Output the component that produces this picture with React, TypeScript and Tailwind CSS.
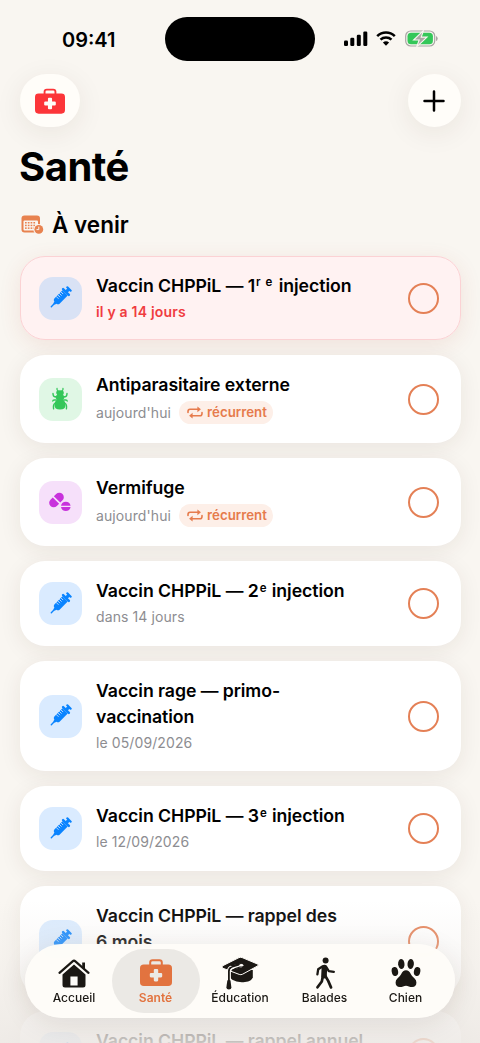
import type { ReactNode } from "react";
import clsx from "clsx";

type Kind = "vaccine" | "lateVaccine" | "parasite" | "pill";

type Reminder = {
  title: ReactNode;
  due: string;
  kind: Kind;
  late?: boolean;
  recurring?: boolean;
  height: string;
};

const reminders: Reminder[] = [
  {
    title: (
      <>
        Vaccin CHPPiL — 1
        <span className="relative -top-[6px] ml-[1px] text-[11.5px] leading-none">r</span>
        <span className="relative -top-[6px] ml-[5px] mr-[2px] text-[11.5px] leading-none">e</span> injection
      </>
    ),
    due: "il y a 14 jours",
    kind: "lateVaccine",
    late: true,
    height: "h-[84.5px]",
  },
  { title: "Antiparasitaire externe", due: "aujourd'hui", kind: "parasite", recurring: true, height: "h-[88px]" },
  { title: "Vermifuge", due: "aujourd'hui", kind: "pill", recurring: true, height: "h-[88px]" },
  {
    title: (
      <>
        Vaccin CHPPiL — 2
        <span className="relative -top-[5px] ml-[1px] mr-[1px] text-[11.5px] leading-none">e</span> injection
      </>
    ),
    due: "dans 14 jours",
    kind: "vaccine",
    height: "h-[84.5px]",
  },
  {
    title: (
      <>
        Vaccin rage — primo-
        <br />
        vaccination
      </>
    ),
    due: "le 05/09/2026",
    kind: "vaccine",
    height: "h-[110.5px]",
  },
  {
    title: (
      <>
        Vaccin CHPPiL — 3
        <span className="relative -top-[5px] ml-[1px] mr-[1px] text-[11.5px] leading-none">e</span> injection
      </>
    ),
    due: "le 12/09/2026",
    kind: "vaccine",
    height: "h-[84.5px]",
  },
  {
    title: (
      <>
        Vaccin CHPPiL — rappel des
        <br />6 mois
      </>
    ),
    due: "le 12/12/2026",
    kind: "vaccine",
    height: "h-[110.5px]",
  },
  { title: "Vaccin CHPPiL — rappel annuel", due: "le 12/06/2027", kind: "vaccine", height: "h-[84.5px]" },
];

function MedicalCase({ className }: { className?: string }) {
  return (
    <svg viewBox="0 0 32 27" className={className} fill="currentColor">
      <path d="M10.2 6V3.6Q10.2 1.3 12.6 1.3h6.8q2.4 0 2.4 2.3V6" fill="none" stroke="currentColor" strokeWidth="2" />
      <path
        fillRule="evenodd"
        d="M3.8 5.5h24.4Q32 5.5 32 9.2v14Q32 27 28.2 27H3.8Q0 27 0 23.2v-14Q0 5.5 3.8 5.5ZM14.9 10q-1.100 0-1.100 1.100v2.900H10.900q-1.100 0-1.100 1.100v2.200q0 1.100 1.100 1.100h2.900v2.900q0 1.100 1.100 1.100h2.200q1.100 0 1.100-1.100v-2.900h2.900q1.100 0 1.100-1.100v-2.200q0-1.100-1.100-1.100h-2.900v-2.900q0-1.100-1.100-1.100Z"
      />
    </svg>
  );
}

function CalendarClock() {
  return (
    <svg viewBox="0 0 23 20" className="h-5 w-[23px]">
      <rect x="0.5" y="0.5" width="18.5" height="17" rx="3" fill="#e8824f" />
      <rect x="2.5" y="5.5" width="14.5" height="10" rx="1" fill="#f9f6f1" />
      <g fill="#e8824f">
        {[4, 6.8, 9.6, 12.4].map((x) => (
          <g key={x}>
            <rect x={x} y="7" width="1.7" height="1.5" />
            <rect x={x} y="9.7" width="1.7" height="1.5" />
            <rect x={x} y="12.4" width="1.7" height="1.5" />
          </g>
        ))}
      </g>
      <circle cx="17.8" cy="14.4" r="5.4" fill="#f9f6f1" />
      <circle cx="17.8" cy="14.4" r="4.4" fill="#e8824f" />
      <path d="M17.8 11.6v3h-2.3" fill="none" stroke="#f9f6f1" strokeWidth="1" />
    </svg>
  );
}

function Syringe() {
  return (
    <svg viewBox="0 0 24 24" className="size-6" fill="currentColor">
      <g transform="rotate(45 12 12)">
        <rect x="8.6" y="-1.8" width="6.8" height="2.2" rx="1" />
        <rect x="10.4" y="-1" width="3.2" height="4" />
        <rect x="6.7" y="2.3" width="10.6" height="2.5" rx="1.2" />
        <path d="M8.3 4.8h7.4v11.5q0 1.8-2.3 2.300l-.4 1.900h-2l-.4-1.900q-2.300-.5-2.300-2.300Z" />
        <rect x="11.3" y="19.5" width="1.4" height="5.5" rx="0.7" />
        <path d="M8 7h3.400M8 9.200h3.400M8 11.400h3.400M8 13.600h3.400" stroke="#daeafe" strokeWidth="0.8" fill="none" />
      </g>
    </svg>
  );
}

function Bug() {
  return (
    <svg viewBox="0 0 16 24" className="h-6 w-4" fill="currentColor">
      <path d="M5 1.5Q4.6 3 6.2 4M11 1.5Q11.4 3 9.8 4" stroke="currentColor" strokeWidth="1.3" strokeLinecap="round" fill="none" />
      <path d="M4.2 5.6Q4.2 3.200 8 3.200t3.800 2.400-1 2.200Q12.700 8.700 12.500 10.500q-.2 1.600-1.700 2 2.800 1.900 2.800 5.500Q13.600 22.600 8 22.600T2.400 18q0-3.600 2.800-5.500-1.500-.4-1.700-2Q3.300 8.700 5.200 7.800 4.200 7.200 4.200 5.600Z" />
      <path
        d="M4.500 9.800H2.700Q1 9.500 1 6.500M11.500 9.800h1.800Q15 9.500 15 6.500M5 13H2.200Q.9 13 .8 14M11 13h2.800q1.300 0 1.400 1M2.800 16.500Q.9 17.500 1.600 21.800M13.200 16.500q1.900 1 1.200 5.300"
        fill="none"
        stroke="currentColor"
        strokeWidth="1.4"
        strokeLinecap="round"
      />
    </svg>
  );
}

function Pills() {
  return (
    <svg viewBox="0 0 24 24" className="size-6" fill="currentColor">
      <g transform="rotate(-45 8.500 10)">
        <path d="M7.700 5.500v9H4.500a4.500 4.500 0 0 1 0-9ZM9.300 5.500v9h3.200a4.500 4.500 0 0 0 0-9Z" />
      </g>
      <path d="M13 15.700a4.900 4.900 0 0 1 9.600 0ZM13 17.100a4.900 4.900 0 0 0 9.600 0Z" />
    </svg>
  );
}

function RepeatIcon() {
  return (
    <svg viewBox="0 0 16 13" className="h-[13px] w-4" fill="none" stroke="currentColor" strokeWidth="1.6" strokeLinecap="round">
      <path d="M1 6.500V5.600Q1 3.300 3 3.300h8M15 6.500v.9q0 2.300-2 2.300H5" />
      <path d="M10.400.4v5.800l3.500-2.900ZM5.600 6.800v5.800L2.100 9.700Z" fill="currentColor" stroke="none" />
    </svg>
  );
}

const tiles = {
  vaccine: { icon: <Syringe />, className: "bg-[#daebff] text-[#0a84ff]" },
  lateVaccine: { icon: <Syringe />, className: "bg-[#d9e2f5] text-[#0a84ff]" },
  parasite: { icon: <Bug />, className: "bg-[#e0f7e5] text-[#34c759]" },
  pill: { icon: <Pills />, className: "bg-[#f6e0fa] text-[#c832dc]" },
};

function ReminderCard({ item }: { item: Reminder }) {
  const tile = tiles[item.kind];
  return (
    <li
      className={clsx(
        "flex shrink-0 items-center rounded-[25px] pl-[19px] pr-[22px]",
        item.height,
        item.late
          ? "bg-[#fff2f2] shadow-[0_5px_22px_rgba(170,60,40,0.1)] outline-[1.5px] -outline-offset-1 outline-[#fbd2d4]"
          : "bg-white shadow-[0_5px_22px_rgba(60,40,20,0.08)]",
      )}
    >
      <div className={clsx("flex size-[43px] shrink-0 items-center justify-center rounded-[14px]", tile.className)}>
        {tile.icon}
      </div>
      <div className="ml-[14.5px] flex-1 pb-[2px] whitespace-nowrap">
        <h3 className="text-[17.7px] leading-[26px] font-semibold tracking-[-0.07px] text-black">{item.title}</h3>
        <div className={clsx("mt-[2px] flex items-center", item.recurring ? "h-[25px]" : "h-[21px]")}>
          <span
            className={clsx(
              "text-[14px]",
              item.late ? "font-semibold tracking-[0.2px] text-[#f03c40]" : "tracking-[0.1px] text-[#8d8d91]",
            )}
          >
            {item.due}
          </span>
          {item.recurring && (
            <span className="ml-2 flex h-[23px] w-[94px] items-center gap-1 rounded-full bg-[#fdefe8] pt-px pl-2 text-[13.3px] font-semibold text-[#e67b4c]">
              <RepeatIcon />
              récurrent
            </span>
          )}
        </div>
      </div>
      <button aria-label="Terminer" className="size-[31px] shrink-0 rounded-full border-2 border-[#e48056]" />
    </li>
  );
}

function StatusBar() {
  return (
    <div className="flex h-[74px] shrink-0 items-start pt-[16.5px]">
      <div className="w-[165px] pt-[8px] pl-[62px] text-[20px] leading-[30px] font-semibold">09:41</div>
      <div className="h-11 w-[150px] rounded-full bg-black" />
      <div className="flex h-11 items-center pl-[29px]">
        <svg viewBox="0 0 24 16" className="h-4 w-6">
          <rect x="0" y="9.5" width="4" height="5.5" rx="1.2" />
          <rect x="6.3" y="6.8" width="4" height="8.2" rx="1.2" />
          <rect x="12.8" y="3.7" width="4" height="11.3" rx="1.2" />
          <rect x="19.3" y="0.5" width="4" height="14.5" rx="1.2" />
        </svg>
        <svg viewBox="0 0 20 15" className="ml-2 h-[15px] w-5" fill="none" stroke="black" strokeWidth="2.6">
          <path d="M1.200 5.100Q5 1.500 10 1.500t8.800 3.600M4.500 8.600Q6.800 6.500 10 6.500t5.500 2.100" />
          <path d="M10 14.800 6.900 11.600q3.100-2.500 6.200 0Z" fill="black" stroke="none" />
        </svg>
        <svg viewBox="0 0 33 17" className="ml-[9px] h-[17px] w-[33px]">
          <rect x="0.7" y="1" width="29" height="15" rx="5" fill="none" stroke="#a8a6a3" strokeWidth="1.2" />
          <rect x="2.5" y="2.8" width="25.4" height="11.4" rx="3.5" fill="#34c759" />
          <path d="M31 6q1.700.5 1.700 2.500T31 11Z" fill="#a8a6a3" />
          <path d="M18.600.4 8.600 10h5.600l-2.600 6.900L22 7.100h-5.800Z" fill="#aaa8a4" stroke="#f9f6f1" strokeWidth="1.1" />
        </svg>
      </div>
    </div>
  );
}

function House() {
  return (
    <svg viewBox="0 0 32 30" className="h-[30px] w-8" fill="currentColor">
      <path d="M1.500 14.800 14.600 3.300q1.400-1.200 2.800 0L30.500 14.800" fill="none" stroke="currentColor" strokeWidth="2.2" strokeLinecap="round" />
      <path d="M24.200 4.500h2.800v7l-2.800-2.400Z" />
      <path fillRule="evenodd" d="M16 6.400 27.500 16.500V27q0 2.500-2.500 2.500H7Q4.500 29.500 4.500 27V16.500ZM12.400 18.500v9h7.200v-9Z" />
    </svg>
  );
}

function GradCap() {
  return (
    <svg viewBox="0 0 38 34" className="h-[34px] w-[38px]">
      <path fill="currentColor" d="M9.500 14h22.300v7.200q-1 4-7.800 4.800-8 .8-12.700-2.200Q9.500 22.500 9.500 21Z" />
      <path
        fill="currentColor"
        stroke="#fefcf8"
        strokeWidth="1"
        d="M18 1.600q1.600-.6 3.200 0L36.500 8q1.600.9.200 1.900L21.600 18.200q-1.700.9-3.400.2L1.800 12.200Q0 11 1.800 9.700Z"
      />
      <path d="M20.500 9.300 10.700 11.300Q7.900 12 7.900 15v9" fill="none" stroke="#fefcf8" strokeWidth="3.8" />
      <path d="M14 10.700 10.700 11.300Q7.900 12 7.900 15v9" fill="none" stroke="currentColor" strokeWidth="1.8" />
      <path d="M9.400 9.200 20 7.100 21 11 14 13.300" fill="currentColor" />
      <path d="M20 9.500 11.700 12.100Q9.700 12.900 9.700 15.500" fill="none" stroke="#fefcf8" strokeWidth="1.2" />
      <ellipse cx="20.4" cy="9.3" rx="2" ry="1.2" fill="#fefcf8" />
      <path fill="currentColor" d="M6.300 24.500q1.600-1.500 3.200 0l.9 7q0 1.900-2.500 1.900t-2.500-1.900Z" />
    </svg>
  );
}

function Walker() {
  return (
    <svg viewBox="0 0 20 32" className="h-8 w-5" fill="none" stroke="currentColor" strokeLinecap="round" strokeLinejoin="round">
      <circle cx="10.600" cy="3.600" r="3" fill="currentColor" stroke="none" />
      <path d="M9.400 10.600 9 18.600" strokeWidth="5.600" />
      <path d="M7.400 9.500 3.200 12.300 2.400 17.400M11.300 10l2.500 4.100 5 .7" strokeWidth="2.3" />
      <path d="M7.800 19.500 6.800 24.500 2.500 30.300M9.900 18.300l3.300 5.600 2.800 6.500" strokeWidth="2.7" />
    </svg>
  );
}

function Paw() {
  return (
    <svg viewBox="0 0 30 30" className="size-[30px]" fill="currentColor">
      <ellipse cx="10.300" cy="6" rx="3.200" ry="4.900" transform="rotate(-5 10.300 6)" />
      <ellipse cx="19.700" cy="6" rx="3.200" ry="4.900" transform="rotate(5 19.700 6)" />
      <ellipse cx="3.900" cy="13.500" rx="3.200" ry="4.500" transform="rotate(-10 3.900 13.500)" />
      <ellipse cx="26.100" cy="13.500" rx="3.200" ry="4.500" transform="rotate(10 26.100 13.500)" />
      <path d="M15 12.200q3.200 0 4.900 4.100 1 2.200 3.700 4.100 1.800 1.600 1.800 4.200 0 4.400-4.200 4.500-1.800 0-3.300-.7-2.900-1.200-5.800 0-1.500.7-3.300.7-4.200-.1-4.200-4.500 0-2.600 1.800-4.200 2.700-1.900 3.700-4.100Q11.800 12.200 15 12.200Z" />
    </svg>
  );
}

const tabs = [
  { label: "Accueil", icon: <House /> },
  { label: "Santé", icon: <MedicalCase className="h-[27px] w-8" />, active: true },
  { label: "Éducation", icon: <GradCap /> },
  { label: "Balades", icon: <Walker /> },
  { label: "Chien", icon: <Paw /> },
];

function TabBar() {
  return (
    <nav className="grid h-[74px] w-[430px] grid-cols-[81px_82px_87px_82px_80px] rounded-full bg-[#fefcf8]/97 pl-[8.5px] shadow-[0_6px_28px_rgba(60,40,20,0.1)] backdrop-blur-[5px]">
      {tabs.map((tab) => (
        <button
          key={tab.label}
          className={clsx(
            "relative flex flex-col items-center",
            tab.active ? "font-semibold text-[#e2733f]" : "font-medium text-[#1b1814]",
          )}
        >
          {tab.active && <span className="absolute inset-x-[-3px] top-[5px] h-16 rounded-full bg-[#ebe9e5]" />}
          <span className="relative flex h-[46px] items-center justify-center pt-[11px]">{tab.icon}</span>
          <span className="relative text-[12px] leading-[15px]">{tab.label}</span>
        </button>
      ))}
    </nav>
  );
}

export default function App() {
  return (
    <div className="relative flex h-[1043px] w-[480px] flex-col overflow-hidden bg-[#f9f6f1] font-['Inter','Liberation_Sans',sans-serif] text-black">
      <StatusBar />

      <header className="flex shrink-0 justify-between px-[19.5px]">
        <button
          aria-label="Urgence"
          className="flex h-[53px] w-[60.5px] items-center justify-center rounded-full bg-[#fffdf9] text-[#fc3539] shadow-[0_6px_28px_rgba(60,40,20,0.08)]"
        >
          <MedicalCase className="h-[26px] w-[30px]" />
        </button>
        <button
          aria-label="Ajouter"
          className="flex size-[53px] items-center justify-center rounded-full bg-[#fffdf9] shadow-[0_6px_28px_rgba(60,40,20,0.08)]"
        >
          <svg viewBox="0 0 22 22" className="size-[22px]" stroke="currentColor" strokeWidth="2.5" strokeLinecap="round">
            <path d="M11 1.5v19M1.5 11h19" />
          </svg>
        </button>
      </header>

      <h1 className="mt-[14px] shrink-0 pl-[19px] text-[40px] leading-[52px] font-bold tracking-[-0.5px]">Santé</h1>

      <h2 className="mt-[17px] flex h-[30px] shrink-0 items-center gap-[8px] pl-[21px] text-[22.5px] leading-[30px] font-semibold">
        <CalendarClock />À venir
      </h2>

      <ul className="mt-[15.75px] flex shrink-0 flex-col gap-[15px] px-[19.5px]">
        {reminders.map((item, i) => (
          <ReminderCard key={i} item={item} />
        ))}
      </ul>

      {/* Content fades out behind the floating tab bar */}
      <div className="pointer-events-none absolute inset-x-0 bottom-0 h-[143px] bg-linear-to-b from-[#ede9e5]/0 via-[#eeeae6]/40 to-[#ede9e5]/85" />
      <div className="absolute bottom-[25px] left-[25px]">
        <TabBar />
      </div>
    </div>
  );
}
